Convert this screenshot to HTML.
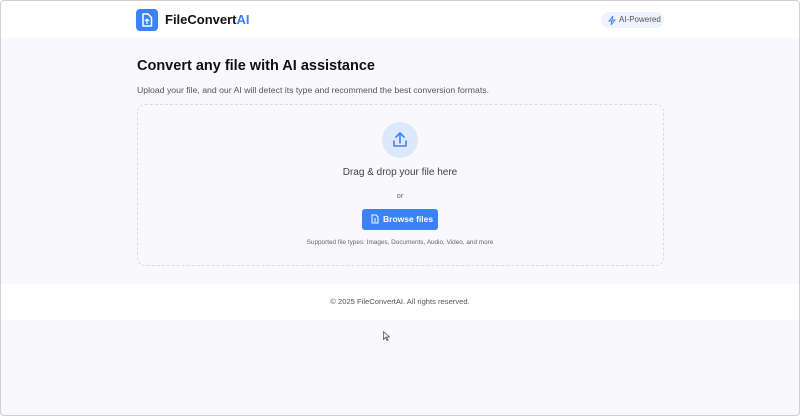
<!DOCTYPE html>
<html><head><meta charset="utf-8"><style>
*{margin:0;padding:0;box-sizing:border-box}
body{width:800px;height:416px;background:#f9f9fd;font-family:"Liberation Sans",sans-serif;position:relative;overflow:hidden}
.frame{position:absolute;left:0;top:0;width:800px;height:416px;border:1px solid #cfcfd4;border-radius:4px;pointer-events:none}
.hdr{position:absolute;left:0;top:0;width:800px;height:38px;background:#fff}
.logo{position:absolute;left:136px;top:9px;width:22px;height:22px;background:#3b82f6;border-radius:4px}
.brand{position:absolute;left:165px;top:12px;font-size:13px;font-weight:bold;color:#111}
.brand span{color:#3b82f6}
.pill{position:absolute;left:601px;top:12px;width:63px;height:16px;background:#eef3fd;border-radius:8px;font-size:8px;color:#555;line-height:16px;padding-left:18px}
.pill svg{position:absolute;left:7px;top:4px}
h1{position:absolute;left:137px;top:58px;font-size:14.5px;font-weight:bold;color:#111}
.sub{position:absolute;left:137px;top:85px;font-size:8.7px;color:#555}
.drop{position:absolute;left:137px;top:104px;width:527px;height:162px;border:1.5px dashed #dadae0;border-radius:8px}
.circ{position:absolute;left:382px;top:122px;width:36px;height:36px;border-radius:50%;background:#dde8fb}
.dd{position:absolute;left:0;width:800px;text-align:center;color:#444}
.btn{position:absolute;left:362px;top:209px;width:76px;height:21px;background:#3b82f6;border-radius:3px;color:#fff;font-size:8.5px;font-weight:bold;line-height:21px;padding-left:21px}
.btn svg{position:absolute;left:9px;top:5px}
.foot{position:absolute;left:0;top:284px;width:800px;height:36px;background:#fff;text-align:center;font-size:7.6px;color:#555;line-height:36px}
</style></head><body>
<div class="hdr"></div>
<div class="logo"><svg width="22" height="22" viewBox="0 0 22 22"><path d="M7 5h5l3.5 3.5V17H7z" fill="none" stroke="#fff" stroke-width="1.5" stroke-linejoin="round"/><path d="M11 10v5M9 12l2-2 2 2" stroke="#fff" stroke-width="1.3" fill="none"/></svg></div>
<div class="brand">FileConvert<span>AI</span></div>
<div class="pill"><svg width="8" height="9" viewBox="0 0 8 9"><path d="M5 0L1 5h3L3 9l4-5H4z" fill="none" stroke="#3b82f6" stroke-width="0.9"/></svg>AI-Powered</div>
<h1>Convert any file with AI assistance</h1>
<div class="sub">Upload your file, and our AI will detect its type and recommend the best conversion formats.</div>
<div class="drop"></div>
<div class="circ"><svg width="36" height="36" viewBox="0 0 36 36"><path d="M18 11v10M14 15l4-4 4 4M12 19v5h12v-5" fill="none" stroke="#3b82f6" stroke-width="1.6" stroke-linecap="round" stroke-linejoin="round"/></svg></div>
<div class="dd" style="top:167px;font-size:10px">Drag &amp; drop your file here</div>
<div class="dd" style="top:191px;font-size:7.5px;color:#666">or</div>
<div class="btn"><svg width="8" height="10" viewBox="0 0 8 10"><path d="M1 1h4l2 2v6H1z M3 5h2M3 7h2" fill="none" stroke="#fff" stroke-width="1"/></svg>Browse files</div>
<div class="dd" style="top:239px;font-size:6.4px;color:#666">Supported file types: Images, Documents, Audio, Video, and more</div>
<div class="foot">© 2025 FileConvertAI. All rights reserved.</div>
<svg style="position:absolute;left:383px;top:331px" width="7" height="10" viewBox="0 0 7 10"><path d="M0.5 0.5v8l2-2 1.5 3 1-0.5-1.5-3h3z" fill="#fff" stroke="#444" stroke-width="0.7"/></svg>
<div class="frame"></div>
</body></html>
